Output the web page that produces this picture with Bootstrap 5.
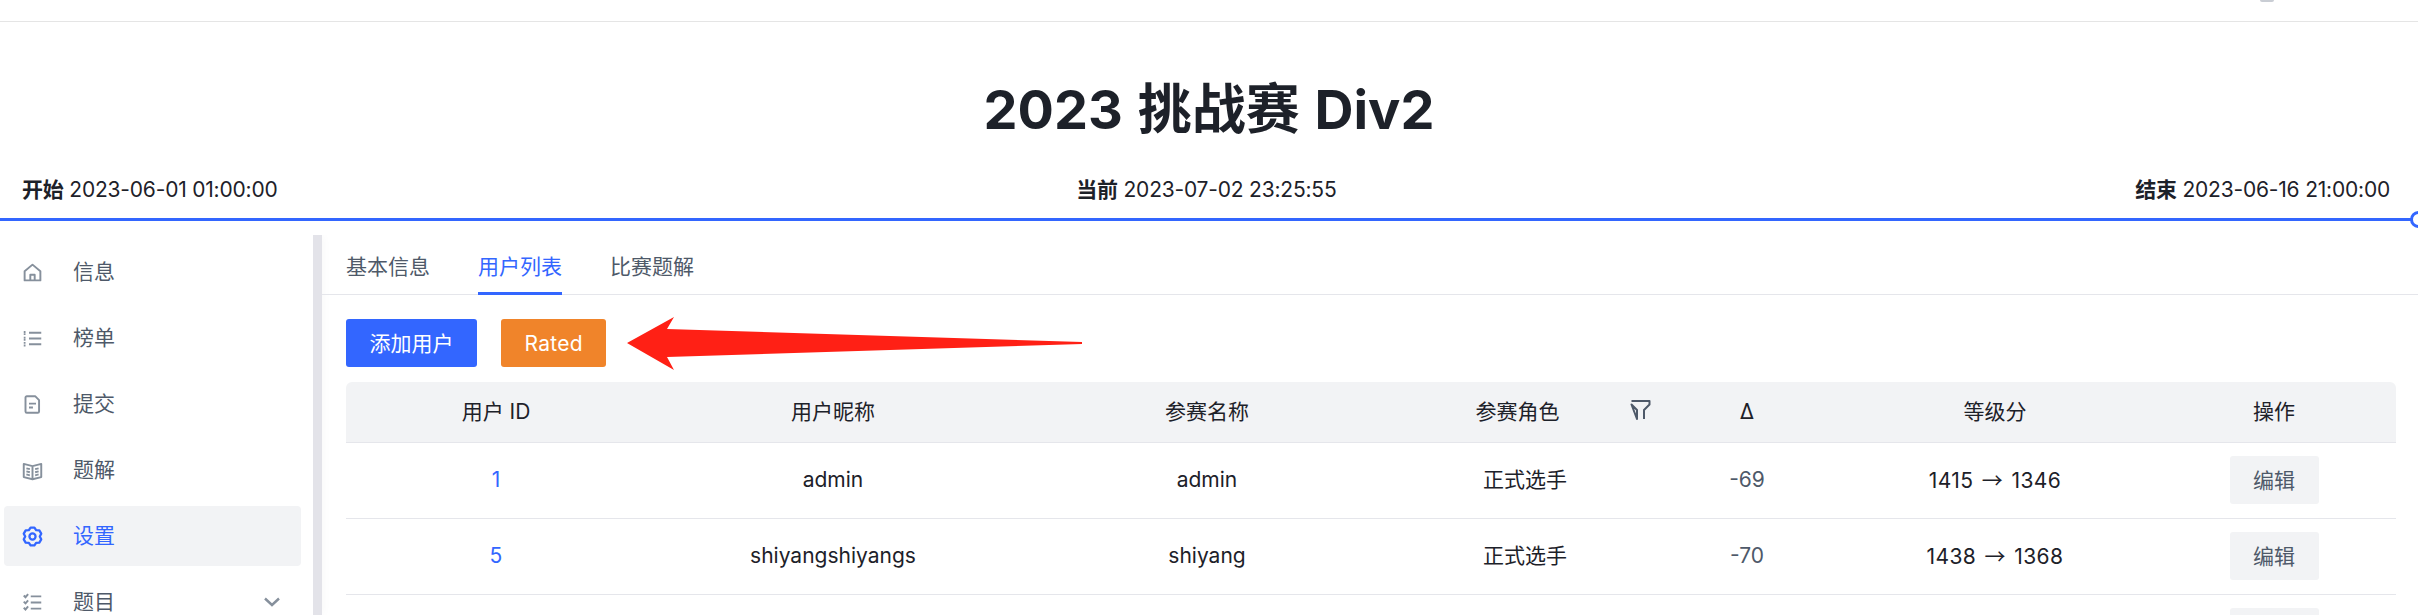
<!DOCTYPE html>
<html lang="zh-CN">
<head>
  <meta charset="UTF-8">
  <title>2023 挑战赛 Div2</title>
  <link href="https://cdn.jsdelivr.net/npm/bootstrap@5.3.0/dist/css/bootstrap.min.css" rel="stylesheet">
  <style>
    body { font-family: Inter, "Noto Sans CJK SC", sans-serif; font-size: 21px; color: #1d2129; overflow: hidden; }
    .top-strip { height: 22px; border-bottom: 1px solid #e5e5e5; padding-right: 144px; }
    .avatar-edge { width: 14px; height: 2px; background: #c9cdd4; border-radius: 0 0 7px 7px; }
    .contest-title { font-size: 54px; font-weight: 700; line-height: 58px; margin: 0; padding-top: 59px; word-spacing: 2px; }
    .time-row { padding: 35px 28px 12px 22px; line-height: 32px; letter-spacing: -.2px; }
    .time-row b { font-weight: 700; }
    .time-line { height: 3px; background: #3366ff; margin-bottom: 14px; }
    .time-knob { right: -9px; top: -7px; width: 17px; height: 17px; border: 3px solid #3366ff; background: #fff; border-radius: 50%; }
    .side-menu { width: 322px; flex: none; padding: 7px 12px 0 4px; border-right: 9px solid #e3e3e9; box-shadow: 0 0 10px rgba(0, 0, 0, .04); }
    .side-item { height: 60px; margin-bottom: 6px; padding: 0 21px 0 18px; border-radius: 4px; color: #4e5969; text-decoration: none; flex: none; }
    .side-item svg { width: 21px; height: 21px; margin-right: 30px; stroke: #86909c; fill: none; stroke-width: 2.2; flex: none; }
    .side-item.active { background: #f2f3f5; color: #3366ff; }
    .side-item.active svg { stroke: #3366ff; stroke-width: 2.6; }
    .side-item svg.menu-chevron { width: 16px; height: 16px; margin: 0 0 0 auto; stroke-width: 2.4; }
    .tab-bar { gap: 48px; padding-left: 24px; border-bottom: 1px solid #e5e6eb; height: 60px; flex: none; }
    .tab-link { padding: 16px 0 9px; margin-bottom: -1px; line-height: 32px; height: 60px; color: #4e5969; text-decoration: none; border-bottom: 3px solid transparent; }
    .tab-link.active { color: #3366ff; border-bottom-color: #3366ff; }
    .panel-body { padding: 24px 22px 0 24px; }
    .tool-row { gap: 24px; margin-bottom: 15px; }
    .action-btn { height: 48px; font-size: 21px; line-height: 1; padding: 0 23.500px; border: 0; border-radius: 3px; color: #fff; }
    .action-btn.add-user, .action-btn.add-user:hover { background: #3366ff; color: #fff; }
    .action-btn.rated, .action-btn.rated:hover { background: #f0842a; color: #fff; letter-spacing: .3px; }
    .red-arrow { left: 281px; top: -2px; width: 455px; height: 53px; }
    .user-table { table-layout: fixed; width: 2050px; --bs-table-border-color: #e5e6eb; --bs-table-color: #1d2129; }
    .user-table thead { vertical-align: middle; }
    .user-table thead th { --bs-table-bg: #f2f3f5; font-weight: 400; height: 60px; padding: 0 8px; }
    .user-table thead th:first-child { border-top-left-radius: 6px; }
    .user-table thead th:last-child { border-top-right-radius: 6px; }
    .user-table thead th.role-head { padding: 0 5px 0 11px; }
    .user-table td { height: 76px; padding: 0 8px; }
    .filter-icon { width: 21px; height: 21px; stroke: #4e5969; fill: none; stroke-width: 2; margin-top: -5px; flex: none; }
    .uid-link { color: #3366ff; text-decoration: none; }
    .delta-cell { color: #4e5969; }
    .user-table td.score-cell { letter-spacing: .4px; }
    .score-arrow { font-family: "Noto Sans CJK SC", sans-serif; margin: 0 2px; }
    .edit-btn, .edit-btn:hover { height: 48px; width: 89px; padding: 0; border: 0; border-radius: 3px; font-size: 21px; line-height: 1; background: #f2f3f5; color: #4e5969; }
  </style>
</head>
<body>
  <div class="d-flex flex-column vh-100 overflow-hidden">
    <!-- top bar, avatar is scrolled out -->
    <div class="top-strip d-flex justify-content-end flex-shrink-0">
      <div class="avatar-edge"></div>
    </div>

    <h1 class="contest-title text-center flex-shrink-0">2023 挑战赛 Div2</h1>

    <div class="time-row d-flex justify-content-between flex-shrink-0">
      <div><b>开始</b> 2023-06-01 01:00:00</div>
      <div><b>当前</b> 2023-07-02 23:25:55</div>
      <div><b>结束</b> 2023-06-16 21:00:00</div>
    </div>
    <div class="time-line position-relative flex-shrink-0">
      <div class="time-knob position-absolute"></div>
    </div>

    <div class="d-flex flex-grow-1 overflow-hidden">
      <!-- Sidebar -->
      <aside class="side-menu d-flex flex-column">
        <a class="side-item d-flex align-items-center" href="#">
          <svg viewBox="0 0 24 24" stroke-linejoin="round"><path d="M3 10.5 12 3l9 7.5V21H3zM9.5 21v-6.5h5V21"/></svg>信息
        </a>
        <a class="side-item d-flex align-items-center" href="#">
          <svg viewBox="0 0 24 24"><path d="M8 5.5h14M8 12h14M8 18.5h14M2 4.500h2M2 7h2M2 11h2M2 13.500h2M2 17h2M2 20h2" /></svg>榜单
        </a>
        <a class="side-item d-flex align-items-center" href="#">
          <svg viewBox="0 0 24 24" stroke-linejoin="round"><path d="M5.500 2.500H15l4.500 4.500v13a1.500 1.500 0 0 1-1.500 1.500H5.500A1.500 1.500 0 0 1 4 20V4a1.500 1.500 0 0 1 1.500-1.500zM8 11h8M8 15.500h4.500"/></svg>提交
        </a>
        <a class="side-item d-flex align-items-center" href="#">
          <svg viewBox="0 0 24 24" stroke-linejoin="round"><path d="M2 4.500 12 7l10-2.500v15L12 22 2 19.500zM12 7v15M5 9.500l4 1M5 13l4 1M5 16.500l4 1M19 9.500l-4 1M19 13l-4 1M19 16.500l-4 1" /></svg>题解
        </a>
        <a class="side-item active d-flex align-items-center" href="#">
          <svg viewBox="0 0 24 24" stroke-linejoin="round"><path d="M9.820 1.730 14.180 1.730 16.150 4.810 19.800 4.970 21.990 8.760 20.300 12 21.990 15.240 19.800 19.030 16.150 19.190 14.180 22.270 9.820 22.270 7.850 19.190 4.200 19.030 2.010 15.240 3.700 12 2.010 8.760 4.200 4.970 7.850 4.810z"/><circle cx="12" cy="12" r="3.500"/></svg>设置
        </a>
        <a class="side-item d-flex align-items-center" href="#">
          <svg viewBox="0 0 24 24"><path d="M10 5h12M10 12h12M10 19h12M2 4l2 2 3-3.500M2 11l2 2 3-3.500M2 18l2 2 3-3.500"/></svg>题目
          <svg class="menu-chevron" viewBox="0 0 16 16"><path d="M1 4.500 8 11l7-6.500"/></svg>
        </a>
      </aside>

      <!-- Main panel -->
      <main class="flex-grow-1 d-flex flex-column">
        <nav class="tab-bar d-flex">
          <a class="tab-link" href="#">基本信息</a>
          <a class="tab-link active" href="#">用户列表</a>
          <a class="tab-link" href="#">比赛题解</a>
        </nav>

        <div class="panel-body">
          <div class="tool-row d-flex position-relative">
            <button class="btn action-btn add-user" type="button">添加用户</button>
            <button class="btn action-btn rated" type="button">Rated</button>
            <svg class="red-arrow position-absolute" viewBox="0 0 455 53"><polygon points="0,26 47,0 40,12 455,25 455,27 40,40 47,53" fill="#ff2015"/></svg>
          </div>

          <table class="table user-table text-center align-middle mb-0">
            <colgroup>
              <col style="width:300px"><col style="width:374px"><col style="width:374px"><col style="width:262px"><col style="width:182px"><col style="width:314px"><col style="width:244px">
            </colgroup>
            <thead>
              <tr>
                <th>用户 ID</th>
                <th>用户昵称</th>
                <th>参赛名称</th>
                <th class="role-head">
                  <div class="d-flex align-items-center">
                    <span class="flex-grow-1">参赛角色</span>
                    <svg class="filter-icon" viewBox="0 0 21 21" stroke-linejoin="round"><path d="M1.500 2h18v3.500l-5.500 5.500v9M7 20v-9L1.500 5.500z"/></svg>
                  </div>
                </th>
                <th>Δ</th>
                <th>等级分</th>
                <th>操作</th>
              </tr>
            </thead>
            <tbody>
              <tr>
                <td><a class="uid-link" href="#">1</a></td>
                <td>admin</td>
                <td>admin</td>
                <td>正式选手</td>
                <td class="delta-cell">-69</td>
                <td class="score-cell">1415 <span class="score-arrow">→</span> 1346</td>
                <td><button class="btn edit-btn" type="button">编辑</button></td>
              </tr>
              <tr>
                <td><a class="uid-link" href="#">5</a></td>
                <td>shiyangshiyangs</td>
                <td>shiyang</td>
                <td>正式选手</td>
                <td class="delta-cell">-70</td>
                <td class="score-cell">1438 <span class="score-arrow">→</span> 1368</td>
                <td><button class="btn edit-btn" type="button">编辑</button></td>
              </tr>
              <tr>
                <td></td><td></td><td></td><td></td><td></td><td></td>
                <td><button class="btn edit-btn" type="button">编辑</button></td>
              </tr>
            </tbody>
          </table>
        </div>
      </main>
    </div>
  </div>
</body>
</html>
